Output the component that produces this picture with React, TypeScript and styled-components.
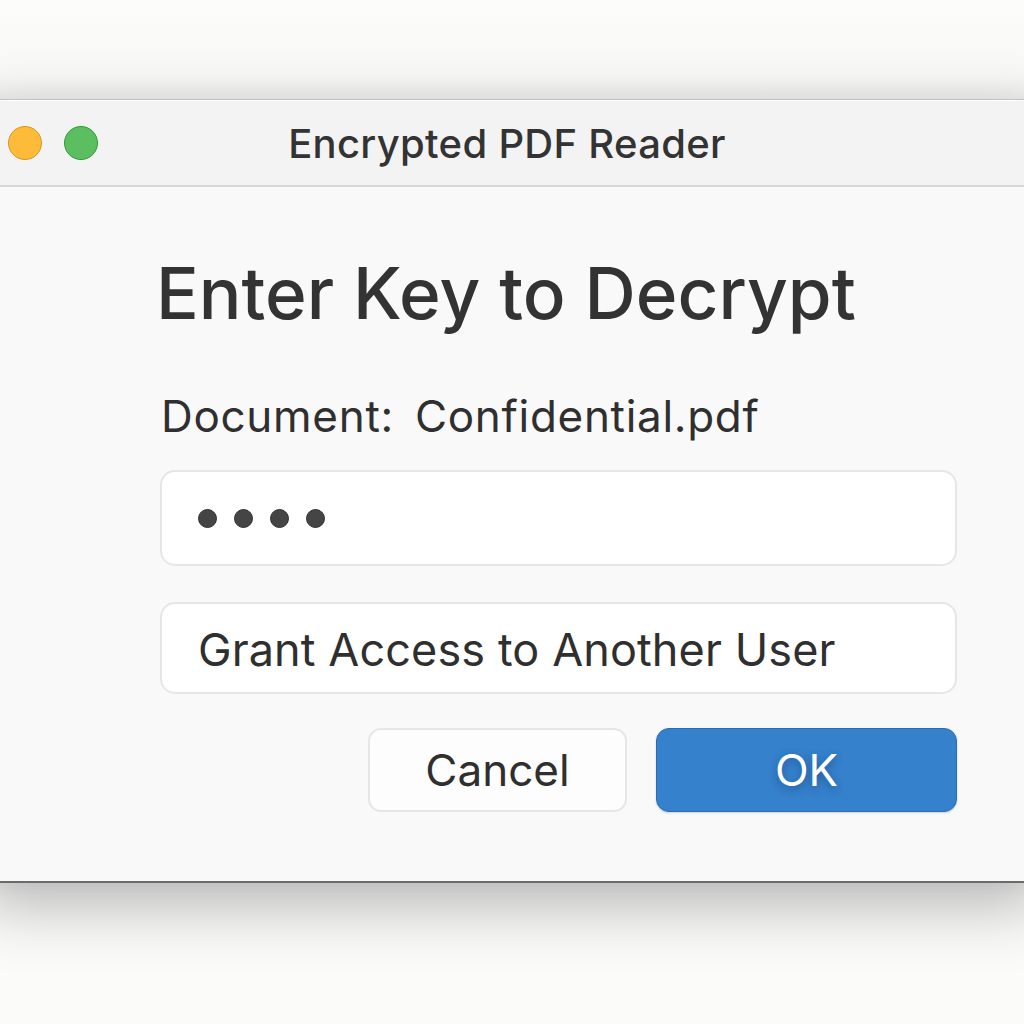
import React, { useState } from 'react'
import styled, { createGlobalStyle } from 'styled-components'

const GlobalStyle = createGlobalStyle`
  html, body {
    margin: 0;
    padding: 0;
    overflow: hidden;
    background: #fbfbfa;
  }
  * {
    box-sizing: border-box;
  }
`

const Page = styled.div`
  width: 1024px;
  height: 1024px;
  padding-top: 99px;
  background: linear-gradient(#fcfcfb 0%, #f7f7f6 9%, #fbfbfa 10%, #fbfbfa 100%);
  font-family: Inter, 'Noto Sans', sans-serif;
  color: #333;
  overflow: hidden;
`

const Window = styled.div`
  margin: 0 -20px;
  width: 1064px;
  border-top: 1px solid #c2c2c2;
  border-bottom: 2px solid #6b6b6b;
  box-shadow: 0 -6px 22px rgba(0, 0, 0, 0.06), 0 22px 60px rgba(0, 0, 0, 0.28);
  background: #f9f9f9;
`

const TitleBar = styled.div`
  height: 87px;
  display: grid;
  grid-template-columns: 1fr auto 1fr;
  align-items: center;
  padding-left: 28px;
  background: #f3f3f3;
  border-top: 1px solid #ffffff;
  border-bottom: 2px solid #d6d6d6;
`

const Lights = styled.div`
  display: flex;
  gap: 22px;
  align-items: center;
`

const Light = styled.span<{ $fill: string; $edge: string }>`
  width: 34px;
  height: 34px;
  border-radius: 50%;
  background: ${p => p.$fill};
  border: 1.5px solid ${p => p.$edge};
`

const Title = styled.div`
  font-size: 40px;
  font-weight: 500;
  letter-spacing: 0.3px;
  color: #333;
  margin-left: -38px;
`

const Body = styled.div`
  display: flex;
  flex-direction: column;
  padding: 62px 87px 69px 180px;
`

const Heading = styled.h1`
  margin: 0;
  font-size: 71px;
  line-height: 88px;
  font-weight: 500;
  color: #333;
  margin-left: -4px;
`

const DocLabel = styled.div`
  margin-top: 53px;
  font-size: 44px;
  line-height: 52px;
  font-weight: 400;
  letter-spacing: 0.7px;
  word-spacing: 8px;
  color: #2f2f2f;
  margin-left: 1px;
`

const Field = styled.div<{ $height: number; $gap: number }>`
  margin-top: ${p => p.$gap}px;
  height: ${p => p.$height}px;
  display: flex;
  align-items: center;
  background: #ffffff;
  border: 2.5px solid #e6e6e6;
  border-radius: 15px;
  padding-left: 36px;
  cursor: text;
`

const Dots = styled.div`
  display: flex;
  gap: 17px;
`

const Dot = styled.span`
  width: 19px;
  height: 19px;
  border-radius: 50%;
  background: #454545;
  border: 1px solid #2f2f2f;
`

const FieldText = styled.span`
  font-size: 45px;
  font-weight: 400;
  letter-spacing: 0.1px;
  color: #2f2f2f;
  margin-top: 3px;
`

const Actions = styled.div`
  margin-top: 34px;
  display: flex;
  justify-content: flex-end;
  gap: 29px;
`

const Button = styled.button<{ $primary?: boolean; $width: number }>`
  width: ${p => p.$width}px;
  height: 84px;
  border-radius: 13px;
  font-family: Inter, 'Noto Sans', sans-serif;
  font-size: 44px;
  font-weight: 400;
  cursor: pointer;
  display: flex;
  align-items: center;
  justify-content: center;
  background: ${p => (p.$primary ? '#3581cc' : '#fdfdfd')};
  color: ${p => (p.$primary ? '#ffffff' : '#2f2f2f')};
  border: ${p => (p.$primary ? '1.5px solid #2a6cb8' : '2.5px solid #e6e6e6')};
  text-shadow: ${p => (p.$primary ? '0 3px 8px rgba(10, 40, 90, 0.45)' : 'none')};
  box-shadow: ${p => (p.$primary ? '0 1px 2px rgba(0, 40, 100, 0.2)' : 'none')};
`

export default function App() {
  const [key] = useState('1234')
  return (
    <>
      <GlobalStyle />
      <Page>
        <Window>
          <TitleBar>
            <Lights>
              <Light $fill="#febb3a" $edge="#d4961f" />
              <Light $fill="#5bbf62" $edge="#2d9a3a" />
            </Lights>
            <Title>Encrypted PDF Reader</Title>
            <div />
          </TitleBar>
          <Body>
            <Heading>Enter Key to Decrypt</Heading>
            <DocLabel>Document: Confidential.pdf</DocLabel>
            <Field $height={96} $gap={28}>
              <Dots>
                {key.split('').map((_, i) => (
                  <Dot key={i} />
                ))}
              </Dots>
            </Field>
            <Field $height={92} $gap={36}>
              <FieldText>Grant Access to Another User</FieldText>
            </Field>
            <Actions>
              <Button $width={259}>Cancel</Button>
              <Button $width={301} $primary>
                OK
              </Button>
            </Actions>
          </Body>
        </Window>
      </Page>
    </>
  )
}
